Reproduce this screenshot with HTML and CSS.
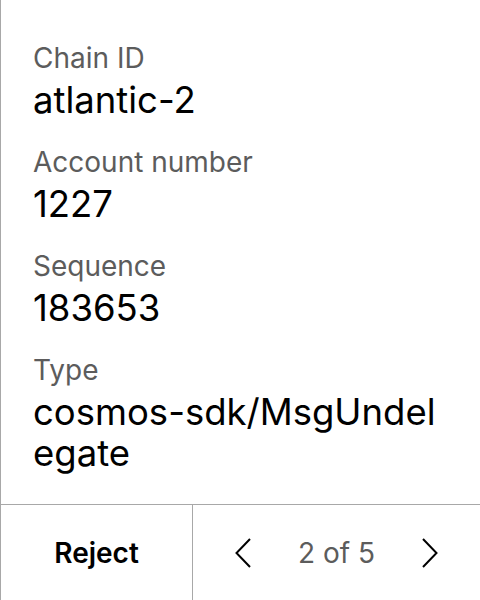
FILE: index.html
```html
<!DOCTYPE html>
<html>
<head>
<meta charset="utf-8">
<link rel="stylesheet" href="styles.css">
</head>
<body>
<div class="screen">
  <div class="details">
    <div class="field">
      <div class="label">Chain ID</div>
      <div class="value">atlantic-2</div>
    </div>
    <div class="field">
      <div class="label">Account number</div>
      <div class="value">1227</div>
    </div>
    <div class="field">
      <div class="label">Sequence</div>
      <div class="value">183653</div>
    </div>
    <div class="field">
      <div class="label">Type</div>
      <div class="value">cosmos-sdk/MsgUndelegate</div>
    </div>
  </div>
  <div class="footer">
    <div class="reject">Reject</div>
    <div class="pager">
      <svg class="chev" width="16" height="30" viewBox="0 0 16 30"><path d="M15 1 L1.5 15 L15 29" fill="none" stroke="#000" stroke-width="2"/></svg>
      <span class="count">2 of 5</span>
      <svg class="chev" width="16" height="30" viewBox="0 0 16 30"><path d="M1 1 L14.5 15 L1 29" fill="none" stroke="#000" stroke-width="2"/></svg>
    </div>
  </div>
</div>
</body>
</html>
```
FILE: styles.css
```css
html, body {
  margin: 0;
  padding: 0;
  background: #fff;
}
body {
  font-family: Inter, "Noto Sans", sans-serif;
  color: #000;
}
.screen {
  width: 480px;
  height: 600px;
  box-sizing: border-box;
  border-left: 1px solid #a8a8a8;
  display: flex;
  flex-direction: column;
}
.details {
  flex: 1;
  padding: 37px 33px 0 32px;
  display: flex;
  flex-direction: column;
  gap: 20px;
}
.label {
  font-size: 28px;
  line-height: 43px;
  color: #5c5c5c;
}
.value {
  font-size: 36.5px;
  line-height: 41px;
  color: #000;
  word-break: break-all;
}
.footer {
  height: 96px;
  box-sizing: border-box;
  border-top: 1px solid #a8a8a8;
  display: flex;
  flex-shrink: 0;
}
.reject {
  width: 191px;
  border-right: 1px solid #a8a8a8;
  display: flex;
  align-items: center;
  justify-content: center;
  font-size: 28px;
  font-weight: 600;
}
.pager {
  flex: 1;
  display: flex;
  align-items: center;
  justify-content: space-between;
  padding: 0 42px 0 42px;
}
.count {
  font-size: 28px;
  color: #5c5c5c;
}
.chev {
  display: block;
}
```
